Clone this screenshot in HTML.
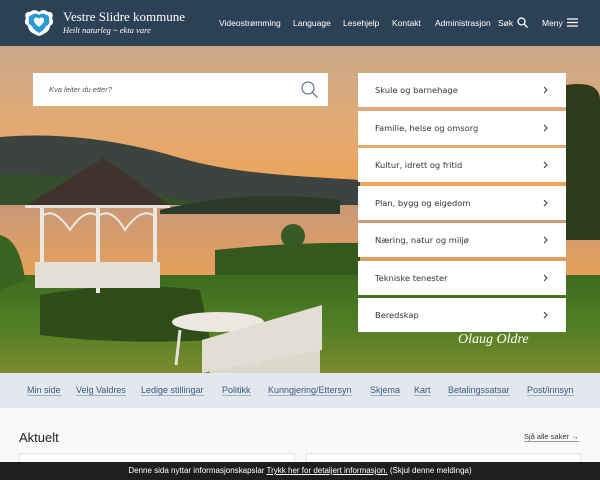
<!DOCTYPE html>
<html><head><meta charset="utf-8"><style>
*{margin:0;padding:0;box-sizing:border-box}
body{width:600px;height:480px;overflow:hidden;font-family:"Liberation Sans",sans-serif;background:#f7f9fb;position:relative}
.hdr{position:absolute;left:0;top:0;width:600px;height:46px;background:#2d4156}
.logo{position:absolute;left:24px;top:9px;width:30px;height:28px}
.t1{position:absolute;left:63px;top:9px;color:#fff;font-family:"Liberation Serif",serif;font-size:13px}
.t2{position:absolute;left:63px;top:25px;color:#fff;font-family:"Liberation Serif",serif;font-style:italic;font-size:8.5px}
.nav{position:absolute;top:18px;color:#fff;font-size:8.5px}
.hero{position:absolute;left:0;top:46px;width:600px;height:327px;overflow:hidden}
.box{position:absolute;background:#fff;font-size:8.3px;color:#333;font-family:"DejaVu Sans",sans-serif}
.sbox{left:33px;top:73px;width:295px;height:33px}
.m{left:358px;width:208px;height:34px;padding:12px 0 0 17px}
.m svg{position:absolute;right:18px;top:13px}
.links{position:absolute;left:0;top:373px;width:600px;height:35px;background:#e3e8ee}
.links span{position:absolute;top:12px;font-size:9px;color:#3a5a80;border-bottom:1px solid #9fb0c4;line-height:10px}
.cookie{position:absolute;left:0;top:462px;width:600px;height:18px;background:#1e1e1e;color:#fff;font-size:8px;text-align:center;padding-top:4px}
.card{position:absolute;top:453px;height:20px;background:#fff;border:1px solid #e3e6ea}
</style></head><body>
<div class="hdr">
<svg class="logo" viewBox="0 0 30 28"><path d="M15 3C12 0 8 1 6 3C2 2 0 6 2 9C0 12 1 16 4 17C4 22 9 25 15 27C21 25 26 22 26 17C29 16 30 12 28 9C30 6 28 2 24 3C22 1 18 0 15 3Z" fill="#fff"/><path d="M15 6C13 4 10 4 8 6C5 6 4 9 5 11C4 13 5 16 8 17C9 20 12 22 15 24C18 22 21 20 22 17C25 16 26 13 25 11C26 9 25 6 22 6C20 4 17 4 15 6Z" fill="#2a9ad6"/><path d="M15 10c-2-3-6-1-5 2 1 3 5 6 5 6s4-3 5-6c1-3-3-5-5-2z" fill="#fff"/></svg>
<div class="t1">Vestre Slidre kommune</div>
<div class="t2">Heilt naturleg ~ ekta vare</div>
<div class="nav" style="left:219px">Videostrømming</div>
<div class="nav" style="left:293px">Language</div>
<div class="nav" style="left:343px">Lesehjelp</div>
<div class="nav" style="left:392px">Kontakt</div>
<div class="nav" style="left:435px">Administrasjon</div>
<div class="nav" style="left:498px">Søk</div>
<svg style="position:absolute;left:517px;top:17px" width="11" height="11" viewBox="0 0 11 11"><circle cx="4.5" cy="4.5" r="3.5" stroke="#fff" stroke-width="1.3" fill="none"/><path d="M7 7l3.5 3.5" stroke="#fff" stroke-width="1.3"/></svg>
<div class="nav" style="left:542px">Meny</div>
<svg style="position:absolute;left:567px;top:18px" width="11" height="9"><path d="M0 1h11M0 4.5h11M0 8h11" stroke="#fff" stroke-width="1.3"/></svg>
</div>
<svg class="hero" viewBox="0 46 600 327" width="600" height="327">
<defs>
<linearGradient id="sky" x1="0" y1="0" x2="0" y2="1"><stop offset="0" stop-color="#c9a88a"/><stop offset=".5" stop-color="#e3aa72"/><stop offset="1" stop-color="#f2a04c"/></linearGradient>
<linearGradient id="lake" x1="0" y1="0" x2="0" y2="1"><stop offset="0" stop-color="#c99878"/><stop offset="1" stop-color="#e8a05a"/></linearGradient>
<linearGradient id="gr" x1="0" y1="0" x2="0" y2="1"><stop offset="0" stop-color="#3f6a1f"/><stop offset=".5" stop-color="#4f7e25"/><stop offset="1" stop-color="#7d8a2e"/></linearGradient>
</defs>
<rect x="0" y="46" width="600" height="170" fill="url(#sky)"/>
<path d="M0 137 C60 132 120 140 180 158 C240 175 300 176 360 180 L360 210 L0 210Z" fill="#3d4440"/>
<path d="M0 175 C80 170 150 195 210 205 L0 210Z" fill="#33502a"/>
<rect x="0" y="205" width="600" height="75" fill="url(#lake)"/>
<path d="M160 210 C200 200 260 190 340 200 L340 214 L160 214Z" fill="#2c3a2c"/>
<path d="M215 280 L215 250 Q290 242 360 243 L360 285Z" fill="#35581e"/>
<circle cx="293" cy="236" r="12" fill="#3a5a25"/>
<path d="M566 85 Q600 80 600 100 L600 240 L566 240Z" fill="#2e3a1c"/>
<rect x="0" y="275" width="600" height="98" fill="url(#gr)"/>
<path d="M0 235 Q20 240 25 280 L0 290Z" fill="#3b6320"/>
<path d="M40 295 Q120 280 200 290 L210 340 Q120 345 40 335Z" fill="#2f4d19"/>
<path d="M103 158 L27 205 L170 205Z" fill="#3f332c"/>
<rect x="25" y="205" width="145" height="3" fill="#e6e2da"/>
<rect x="40" y="208" width="4" height="80" fill="#ece8e0"/><rect x="96" y="208" width="4" height="85" fill="#ece8e0"/><rect x="153" y="208" width="4" height="75" fill="#ece8e0"/>
<path d="M44 215 Q55 208 70 230 Q85 208 96 215 M100 215 Q112 208 125 230 Q140 208 153 215" stroke="#ece8e0" stroke-width="2" fill="none"/>
<rect x="35" y="262" width="125" height="26" fill="#e4e0d6"/>
<rect x="210" y="340" width="110" height="33" fill="#dcd8cc"/>
<path d="M180 330 L176 365 M250 330 L256 365" stroke="#e6e2da" stroke-width="3"/>
<ellipse cx="218" cy="322" rx="46" ry="10" fill="#ece8e0"/>
<path d="M202 340 L322 305 L322 350 L202 373Z" fill="#e2ded4"/>
<text x="458" y="343" fill="#fff" font-family="Liberation Serif" font-style="italic" font-size="14">Olaug Oldre</text>
</svg>
<div class="box sbox"><span style="position:absolute;left:16px;top:12px;font-size:7.5px;font-style:italic;color:#555;font-family:'Liberation Sans',sans-serif">Kva leiter du etter?</span>
<svg style="position:absolute;left:268px;top:8px" width="18" height="18"><circle cx="7" cy="7" r="6" stroke="#4a6080" stroke-width="1.1" fill="none"/><path d="M11.5 11.5l5 5" stroke="#4a6080" stroke-width="1.1"/></svg></div>
<div class="box m" style="top:73px">Skule og barnehage<svg width="5" height="8"><path d="M1 1l3 3-3 3" stroke="#333" fill="none"/></svg></div>
<div class="box m" style="top:111px">Familie, helse og omsorg<svg width="5" height="8"><path d="M1 1l3 3-3 3" stroke="#333" fill="none"/></svg></div>
<div class="box m" style="top:148px">Kultur, idrett og fritid<svg width="5" height="8"><path d="M1 1l3 3-3 3" stroke="#333" fill="none"/></svg></div>
<div class="box m" style="top:186px">Plan, bygg og eigedom<svg width="5" height="8"><path d="M1 1l3 3-3 3" stroke="#333" fill="none"/></svg></div>
<div class="box m" style="top:223px">Næring, natur og miljø<svg width="5" height="8"><path d="M1 1l3 3-3 3" stroke="#333" fill="none"/></svg></div>
<div class="box m" style="top:261px">Tekniske tenester<svg width="5" height="8"><path d="M1 1l3 3-3 3" stroke="#333" fill="none"/></svg></div>
<div class="box m" style="top:298px">Beredskap<svg width="5" height="8"><path d="M1 1l3 3-3 3" stroke="#333" fill="none"/></svg></div>
<div class="links">
<span style="left:27px">Min side</span><span style="left:76px">Velg Valdres</span><span style="left:141px">Ledige stillingar</span><span style="left:222px">Politikk</span><span style="left:268px">Kunngjering/Ettersyn</span><span style="left:370px">Skjema</span><span style="left:414px">Kart</span><span style="left:448px">Betalingssatsar</span><span style="left:527px">Post/innsyn</span>
</div>
<div style="position:absolute;left:19px;top:430px;font-size:13px;color:#222">Aktuelt</div>
<div style="position:absolute;left:524px;top:432px;font-size:7.5px;color:#333;border-bottom:1px solid #999">Sjå alle saker →</div>
<div class="card" style="left:19px;width:276px"></div>
<div class="card" style="left:306px;width:275px"></div>
<div class="cookie">Denne sida nyttar informasjonskapslar <u>Trykk her for detaljert informasjon.</u> (Skjul denne meldinga)</div>
</body></html>
